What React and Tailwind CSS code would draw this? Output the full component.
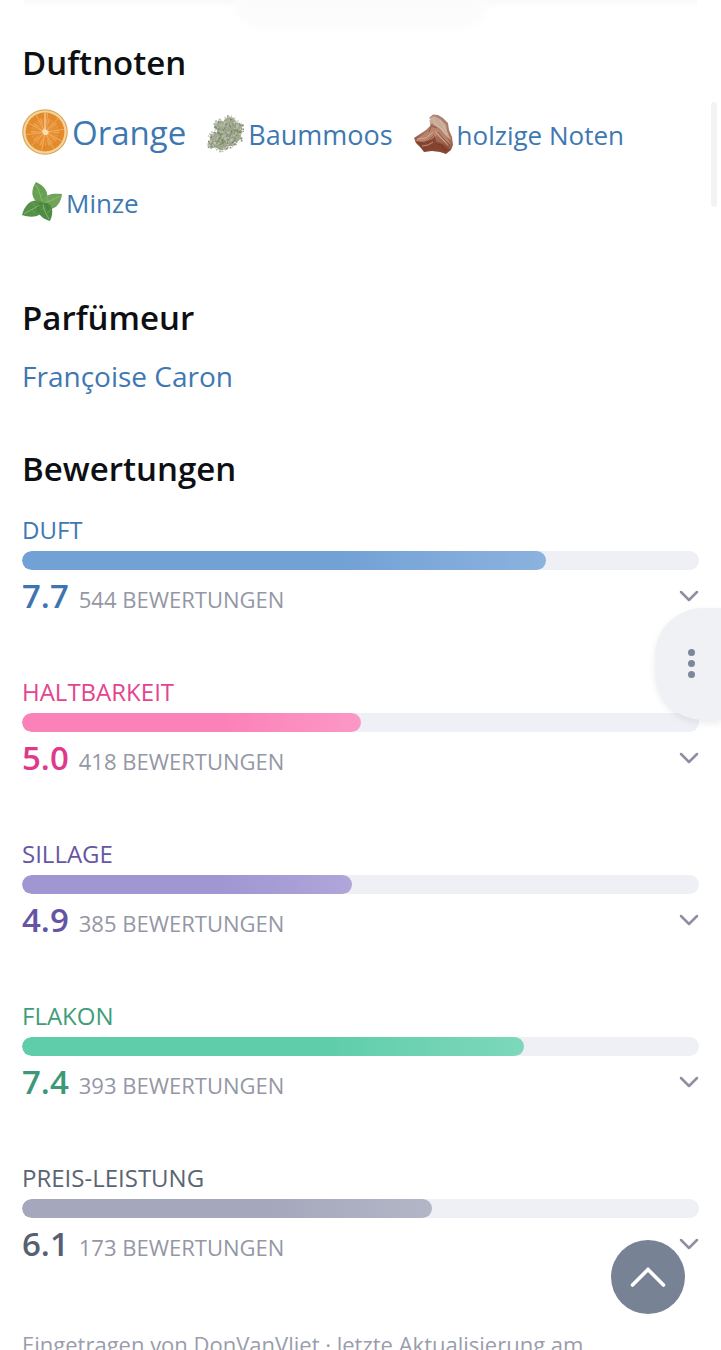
import { ChevronDown } from "lucide-react";

const ratings = [
  { label: "Duft", value: 7.7, count: 544, width: 77.4, text: "text-[#3e78b2]", number: "text-[#3e74b0]", bar: "from-[#72a1d6] to-[#8cb2de]" },
  { label: "Haltbarkeit", value: 5.0, count: 418, width: 50, text: "text-[#e4448f]", number: "text-[#e0398a]", bar: "from-[#fb82b8] to-[#fb98c6]" },
  { label: "Sillage", value: 4.9, count: 385, width: 48.8, text: "text-[#6656a5]", number: "text-[#6553a4]", bar: "from-[#a096d2] to-[#b0a6da]" },
  { label: "Flakon", value: 7.4, count: 393, width: 74.1, text: "text-[#3f9d7c]", number: "text-[#3c9878]", bar: "from-[#5fcda9] to-[#7dd8bb]" },
  { label: "Preis-Leistung", value: 6.1, count: 173, width: 60.6, text: "text-[#5b6472]", number: "text-[#566070]", bar: "from-[#a5a8bc] to-[#b2b6c6]" },
];

export default function App() {
  return (
    <div className="relative h-screen overflow-hidden bg-white font-['Open_Sans',sans-serif] text-[#3e78b2]">
      <div className="absolute inset-x-6 top-0 h-2 bg-linear-to-b from-[#f9f9f9] to-white" />
      <div className="absolute left-1/2 top-0 h-7 w-64 -translate-x-1/2 rounded-b-full bg-[#fcfcfc] blur-[3px]" />
      <div className="absolute right-1 top-[102px] h-[105px] w-[6px] rounded-full bg-[#f3f3f4]" />

      <main className="relative px-[22px] pt-[41px]">
        <section>
          <SectionTitle>Duftnoten</SectionTitle>
          <div className="mt-4 flex flex-wrap gap-x-5">
            <Note icon={<OrangeIcon />} label="Orange" box="mt-2 h-[46px] w-[46px]" text="mt-[10px] text-[33px] leading-[44px]" />
            <Note icon={<MossIcon />} label="Baummoos" box="mt-[13px] h-10 w-[38px]" text="mt-4 text-[27px] leading-9" />
            <Note icon={<WoodIcon />} label="holzige Noten" box="mt-[13px] h-10 w-10" text="mt-4 text-[26px] leading-9" />
            <Note icon={<MintIcon />} label="Minze" box="mt-[13px] h-10 w-10" text="mt-4 text-[26px] leading-9" />
          </div>
        </section>

        <section className="mt-[59px]">
          <SectionTitle>Parfümeur</SectionTitle>
          <a href="#parfumeur" className="mt-[17px] block text-[28px] leading-[38px]">Françoise Caron</a>
        </section>

        <section className="mt-[52px]">
          <SectionTitle>Bewertungen</SectionTitle>
          <div className="mt-[23px] space-y-[58px]">
            {ratings.map((r) => (
              <Rating key={r.label} rating={r} />
            ))}
          </div>
        </section>

        <p className="mt-[62px] text-[22px] leading-8 text-[#9a9dab]">
          Eingetragen von DonVanVliet · letzte Aktualisierung am
        </p>
      </main>

      <button
        aria-label="Menü"
        className="absolute right-0 top-[608px] flex h-[112px] w-[66px] flex-col items-center justify-center gap-1 rounded-l-[48px] bg-[#eff1f5] pb-[2px] pl-[6px] shadow-[0_3px_6px_rgba(90,100,120,0.12)]"
      >
        <span className="size-[7px] rounded-full bg-[#7b879a]" />
        <span className="size-[7px] rounded-full bg-[#7b879a]" />
        <span className="size-[7px] rounded-full bg-[#7b879a]" />
      </button>

      <button
        aria-label="Nach oben"
        className="absolute bottom-9 right-9 flex size-[74px] items-center justify-center rounded-full bg-[#778294] text-white"
      >
        <svg width="36" height="22" viewBox="0 0 36 22" fill="none" stroke="currentColor" strokeWidth="3.6" strokeLinecap="round">
          <path d="M2.5 19 18 3.5 33.5 19" />
        </svg>
      </button>
    </div>
  );
}

function SectionTitle({ children }) {
  return <h2 className="text-[33px] font-semibold leading-[44px] text-[#0d0f12]">{children}</h2>;
}

function Note({ icon, label, box, text }) {
  return (
    <a href="#note" className="flex h-[68px] items-start gap-1">
      <span className={box}>{icon}</span>
      <span className={text}>{label}</span>
    </a>
  );
}

function Rating({ rating }) {
  return (
    <div>
      <p className={`text-[24px] uppercase leading-8 ${rating.text}`}>{rating.label}</p>
      <div className="mt-[5px] h-[19px] overflow-hidden rounded-full bg-[#eff0f5]">
        <div
          className={`h-full rounded-full bg-linear-to-r from-60% ${rating.bar}`}
          style={{ width: `${rating.width}%` }}
        />
      </div>
      <div className="mt-1 flex items-baseline">
        <span className={`text-[33px] font-semibold leading-[44px] ${rating.number}`}>{rating.value.toFixed(1)}</span>
        <span className="ml-[10px] text-[22px] uppercase text-[#9497a5]">{rating.count} Bewertungen</span>
        <button aria-label={`${rating.label} Details`} className="-mr-[6px] ml-auto self-center text-[#8d90a1]">
          <ChevronDown size={32} strokeWidth={1.9} />
        </button>
      </div>
    </div>
  );
}

function OrangeIcon() {
  const spokes = [8, 44, 82, 118, 152, 190, 224, 262, 298, 332];
  return (
    <svg viewBox="0 0 46 46" className="size-full" aria-hidden="true">
      <circle cx="23" cy="23" r="22.8" fill="#d9a760" />
      <circle cx="23" cy="23" r="21.6" fill="#f3d59c" />
      <circle cx="23" cy="23" r="19.4" fill="#e38a2b" />
      <circle cx="23" cy="23" r="14" fill="#ea953a" />
      {spokes.map((a) => (
        <g key={a} transform={`rotate(${a} 23 23)`}>
          <path d="M23 23V4" stroke="#f0b877" strokeWidth="0.7" />
          <path d="M25.5 17l2-8M27 18l4-9" stroke="#cf7119" strokeWidth="0.8" opacity="0.4" />
          <path d="M24.5 15l1-6" stroke="#f3ae5a" strokeWidth="0.7" />
        </g>
      ))}
      <path d="M23 23V4" stroke="#f7d8a6" strokeWidth="1.1" />
      <path d="m20 22 2-2 3 1 2 2-2 3-3 0z" fill="#fae0b0" />
    </svg>
  );
}

const mossColors = ["#8b957a", "#a9b09a", "#c9cdbf", "#949d84", "#b9bfae", "#737d61"];
// x, y, radius of the clumps the lichen is made of
const mossClumps = [
  [25, 8, 7], [32, 14, 7], [16, 12, 7], [20, 19, 10], [30, 22, 8], [10, 25, 7], [16, 31, 7], [6, 31, 4], [24, 28, 6],
];

function noise(n) {
  const s = Math.sin(n * 127.1 + 11.7) * 43758.5453;
  return s - Math.floor(s);
}

const mossTufts = mossClumps.flatMap(([cx, cy, radius], c) =>
  Array.from({ length: 60 }, (_, i) => {
    const n = c * 400 + i * 5;
    const a = noise(n) * Math.PI * 2;
    const d = Math.sqrt(noise(n + 1)) * radius * 1.15;
    return {
      x: cx + Math.cos(a) * d,
      y: cy + Math.sin(a) * d,
      r: 0.4 + noise(n + 2) * 0.8,
      fill: mossColors[Math.floor(noise(n + 3) * 6)],
    };
  })
);

function MossIcon() {
  return (
    <svg viewBox="0 0 40 40" className="size-full" aria-hidden="true">
      {mossClumps.map(([cx, cy, r]) => (
        <circle key={`${cx}-${cy}`} cx={cx} cy={cy} r={r * 0.85} fill="#a1a98f" />
      ))}
      {mossTufts.map((t, i) => (
        <circle key={i} cx={t.x} cy={t.y} r={t.r} fill={t.fill} opacity="0.85" />
      ))}
      <path d="m11 29 3-4 4 1m2-8 4 3 4-4m-12 13 5-2m3-19 2 4" fill="none" stroke="#66714f" strokeWidth="1" opacity="0.5" />
    </svg>
  );
}

function WoodIcon() {
  return (
    <svg viewBox="0 0 40 40" className="size-full" aria-hidden="true">
      <defs>
        <linearGradient id="wood" x1="0.6" y1="0" x2="0.4" y2="1">
          <stop offset="0" stopColor="#a98572" />
          <stop offset="0.5" stopColor="#a9745c" />
          <stop offset="1" stopColor="#7c402b" />
        </linearGradient>
      </defs>
      <path d="M16 4 20 .5 25 1l5 3 5 5 1 7 3 7 1 8-2 5-5 4-6-2-8-1-8 1-3-4-5-5-2-5 6-4 6-4 5-5 1-5z" fill="url(#wood)" />
      <path d="m17 4 4-2 6 3 6 6 1 7 4 8-5-4-6-7-6-4-3-3z" fill="#c9ab9a" />
      <path d="m18 12 5 1 5 4 6 7 4 7-7-4-7-6-4 4-9 3-9-1 6-5 6-4z" fill="#b9846c" />
      <path d="m2 27 9 2 8-4 3-3 1 6 7 2 7 6-5 2-6-2-8-1-8 1-3-4z" fill="#84402a" opacity="0.85" />
      <path d="m19 4 4 7 6 4 4 6M22 17l5 6 8 8M4 25l9-1 7-6M27 6l4 7 4 7M9 32l6-1 5-3" fill="none" stroke="#dfbeaa" strokeWidth="0.9" opacity="0.7" />
      <path d="m17 6 1 6 6 2M25 18l6 7 6 6M7 29l8-2 6-6M23 29l6 3 4 5M18 13l-2 5" fill="none" stroke="#633222" strokeWidth="1" opacity="0.5" />
    </svg>
  );
}

function MintIcon() {
  return (
    <svg viewBox="0 0 40 40" className="size-full" aria-hidden="true">
      <path d="M20 22C9 19 8 9 14 0c9 4 14 11 10 21z" fill="#68a052" />
      <path d="M20 23c0-11 10-12 20-11-1 10-8 18-17 14z" fill="#6fa45a" />
      <path d="M22 22C13 14 3 21 0 33c9 3 20 3 23-8z" fill="#559148" />
      <path d="M18 21c-5 9 0 15 10 18 4-9 3-17-5-19z" fill="#4f8b42" />
      <path d="M20 19C18 12 17 8 14 3M21 21c6-1 11-4 17-7M18 23C12 26 7 29 2 32M21 23c1 6 4 10 6 14" fill="none" stroke="#95c176" strokeWidth="0.8" />
      <path d="m17 12-4-3m5 6 3-4m5 8-1-5m6 2 1 4m-19 4-3-4m-1 7 4 4m10-5-4 2m6 3 4-3" fill="none" stroke="#86b969" strokeWidth="0.7" opacity="0.6" />
      <path d="M19 21c-3 2-4 5-3 9M21 20c3 1 5 4 5 8" fill="none" stroke="#28602b" strokeWidth="1.2" opacity="0.3" />
    </svg>
  );
}
